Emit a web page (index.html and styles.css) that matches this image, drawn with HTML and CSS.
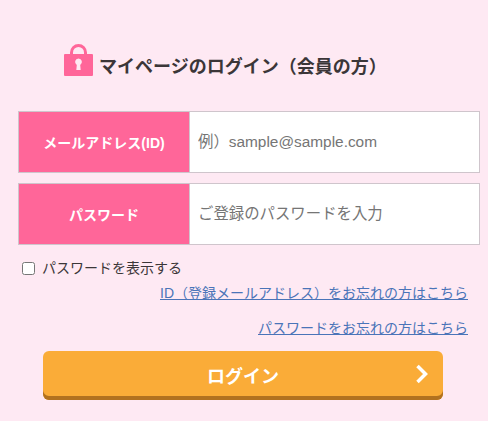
FILE: index.html
```html
<!DOCTYPE html>
<html lang="ja">
<head>
<meta charset="utf-8">
<title>ログイン</title>
<link rel="stylesheet" href="styles.css">
</head>
<body>
<main class="page">
  <h1 class="title">
    <svg class="lock" viewBox="0 0 30 32" aria-hidden="true">
      <path d="M7.500 11V8.500a7 7 0 0 1 14 0V11" fill="none" stroke="#ff6699" stroke-width="3"/>
      <path fill-rule="evenodd" fill="#ff6699" d="M1 10h27a1 1 0 0 1 1 1v20a1 1 0 0 1-1 1H1a1 1 0 0 1-1-1V11a1 1 0 0 1 1-1zM14.500 14.500a3.500 3.500 0 0 0-1.700 6.500l-.5 5h4.400l-.5-5a3.500 3.500 0 0 0-1.700-6.500z"/>
    </svg>
    <span class="title-text">マイページのログイン（会員の方）</span>
  </h1>
  <div class="field">
    <label class="field-label" for="mail">メールアドレス(ID)</label>
    <input class="field-input" id="mail" type="text" placeholder="例）sample@sample.com">
  </div>
  <div class="field">
    <label class="field-label" for="pass">パスワード</label>
    <input class="field-input" id="pass" type="password" placeholder="ご登録のパスワードを入力">
  </div>
  <label class="show"><input class="show-box" type="checkbox"><span>パスワードを表示する</span></label>
  <p class="forgot forgot-id"><a href="#">ID（登録メールアドレス）をお忘れの方はこちら</a></p>
  <p class="forgot forgot-pass"><a href="#">パスワードをお忘れの方はこちら</a></p>
  <button class="login" type="button">
    <span>ログイン</span>
    <svg class="chevron" viewBox="0 0 14 20" aria-hidden="true"><path d="M2.500 2l8 8-8 8" fill="none" stroke="#fff" stroke-width="3.500"/></svg>
  </button>
</main>
</body>
</html>
```
FILE: styles.css
```css
* { box-sizing: border-box; }
html, body { margin: 0; }
body {
  background: #fee9f3;
  color: #3b3638;
  font-family: "Liberation Sans", "Noto Sans CJK JP", sans-serif;
}
.page {
  padding: 44px 8px 0 18px;
  height: 421px;
  overflow: hidden;
}
.title {
  display: flex;
  align-items: flex-end;
  gap: 5px;
  margin: 0 0 35px 46px;
  height: 32px;
  font-size: 18px;
  line-height: 26px;
  font-weight: 700;
}
.title-text { margin-bottom: -4px; }
.lock { width: 30px; height: 32px; flex: none; }
.field {
  display: flex;
  height: 62px;
  margin-bottom: 10px;
  border: 1px solid #cfc5cc;
  background: #fff;
}
.field-label {
  width: 171px;
  flex: none;
  display: flex;
  align-items: center;
  justify-content: center;
  background: #ff6699;
  color: #fff;
  font-size: 14px;
  font-weight: 700;
  border-right: 1px solid #cfc5cc;
}
.field-input {
  flex: 1;
  min-width: 0;
  border: 0;
  outline: 0;
  padding: 0 8px;
  background: transparent;
  font: 15.4px "Liberation Sans", "Noto Sans CJK JP", sans-serif;
}
.field-input::placeholder { color: #757575; opacity: 1; }
.show {
  display: flex;
  align-items: center;
  gap: 7px;
  margin: 13px 0 0 4px;
  font-size: 14px;
  line-height: 20px;
}
.show-box { margin: 0; width: 13px; height: 13px; }
.forgot {
  margin: 0 12px 0 0;
  text-align: right;
  font-size: 14px;
  line-height: 20px;
}
.forgot a { color: #4a74b8; }
.forgot-id { margin-top: 5px; }
.forgot-pass { margin-top: 15px; }
.login {
  position: relative;
  display: flex;
  align-items: center;
  justify-content: center;
  width: 400px;
  height: 49px;
  margin: 13px 0 0 25px;
  padding: 0 0 2px;
  border: 0;
  border-radius: 6px;
  background: #faac38;
  box-shadow: inset 0 -4px 0 #b1711f;
  color: #fff;
  font: 700 18px "Liberation Sans", "Noto Sans CJK JP", sans-serif;
}
.chevron {
  position: absolute;
  right: 14px;
  top: 13px;
  width: 14px;
  height: 20px;
}
```
